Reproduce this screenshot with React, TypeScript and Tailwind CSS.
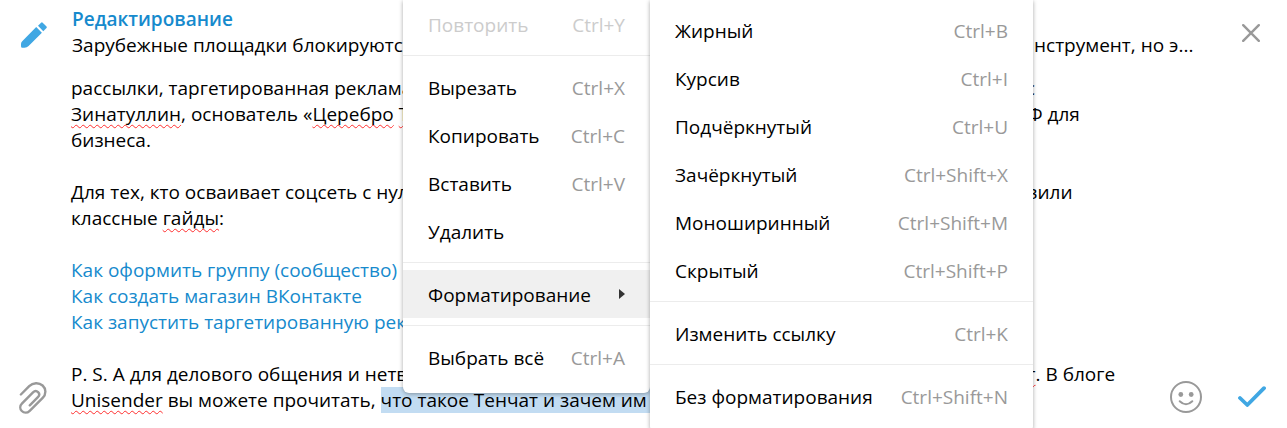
import type { ReactNode } from "react";

type MenuEntry = {
  label: string;
  shortcut?: string;
  disabled?: boolean;
  active?: boolean;
  submenu?: boolean;
};

const editGroups: MenuEntry[][] = [
  [{ label: "Повторить", shortcut: "Ctrl+Y", disabled: true }],
  [
    { label: "Вырезать", shortcut: "Ctrl+X" },
    { label: "Копировать", shortcut: "Ctrl+C" },
    { label: "Вставить", shortcut: "Ctrl+V" },
    { label: "Удалить" },
  ],
  [{ label: "Форматирование", active: true, submenu: true }],
  [{ label: "Выбрать всё", shortcut: "Ctrl+A" }],
];

const formatGroups: MenuEntry[][] = [
  [
    { label: "Жирный", shortcut: "Ctrl+B" },
    { label: "Курсив", shortcut: "Ctrl+I" },
    { label: "Подчёркнутый", shortcut: "Ctrl+U" },
    { label: "Зачёркнутый", shortcut: "Ctrl+Shift+X" },
    { label: "Моноширинный", shortcut: "Ctrl+Shift+M" },
    { label: "Скрытый", shortcut: "Ctrl+Shift+P" },
  ],
  [{ label: "Изменить ссылку", shortcut: "Ctrl+K" }],
  [{ label: "Без форматирования", shortcut: "Ctrl+Shift+N" }],
];

function MenuItem({ label, shortcut, disabled, active, submenu }: MenuEntry) {
  return (
    <button
      type="button"
      role="menuitem"
      disabled={disabled}
      aria-haspopup={submenu ? "menu" : undefined}
      className={`flex h-12 w-full items-center justify-between whitespace-nowrap px-[25px] pt-[2px] text-left ${
        active ? "bg-[#f0f0f0]" : ""
      } ${disabled ? "text-[#cccccc]" : "text-black"}`}
    >
      <span>{label}</span>
      {shortcut && (
        <span className={disabled ? "text-[#cccccc]" : "text-[#999999]"}>{shortcut}</span>
      )}
      {submenu && (
        <svg viewBox="0 0 6 12" className="h-3 w-[6px]" fill="#333333" aria-hidden="true">
          <path d="M0 0L6 5L0 10Z" />
        </svg>
      )}
    </button>
  );
}

function Menu({ groups, className }: { groups: MenuEntry[][]; className: string }) {
  return (
    <div
      role="menu"
      className={`shrink-0 rounded-b-md bg-white shadow-[0_1px_4px_rgba(0,0,0,0.35)] ${className}`}
    >
      {groups.map((group, index) => (
        <div key={group[0].label}>
          {index > 0 && <hr className="my-[7px] border-t border-[#ececec]" />}
          {group.map((entry) => (
            <MenuItem key={entry.label} {...entry} />
          ))}
        </div>
      ))}
    </div>
  );
}

function Misspelled({ children }: { children: ReactNode }) {
  return (
    <span className="underline decoration-[#ff2e2e] decoration-wavy decoration-1 underline-offset-[3px] [text-decoration-skip-ink:none]">
      {children}
    </span>
  );
}

// A line of the message: its beginning and the part that continues past the menus.
function Line({ children, rest }: { children?: ReactNode; rest?: ReactNode }) {
  return (
    <div className="flex h-[26px] whitespace-nowrap">
      <div className="w-[945px] shrink-0">{children}</div>
      <div className="min-w-0 grow">{rest}</div>
    </div>
  );
}

export default function App() {
  return (
    <main className="relative flex min-h-screen flex-col overflow-hidden bg-white font-['Open_Sans',sans-serif] text-[19px] leading-[26px] text-black">
      <header className="flex pt-[6px]">
        <div className="w-[72px] shrink-0 pl-[21px] pt-[15px]">
          <svg viewBox="0 0 27 27" className="size-[27px]" fill="#40a7e3" aria-hidden="true">
            <path d="M15.2 6L20.9 11.7L7.6 25Q6 26.7 3.4 26.7H1.4Q0 26.7 0 25.2V23Q0 21.4 1.2 20.2Z" />
            <path d="M17 4.8L20.1 1.7Q20.9 1 21.7 1.7L25.5 5.4Q26.2 6.2 25.5 7L22.3 10.2Z" />
          </svg>
        </div>
        <div className="min-w-0 grow">
          <h1 className="font-semibold text-[#168acd]">Редактирование</h1>
          <Line rest="&nbsp;инструмент, но э...">Зарубежные площадки блокируются</Line>
        </div>
        <button type="button" aria-label="Закрыть" className="mr-[27px] mt-[18px] size-[18px] shrink-0">
          <svg viewBox="0 0 18 18" className="size-[18px]" stroke="#999999" strokeWidth="2.4" strokeLinecap="round">
            <path d="M1.2 1.2L16.8 16.8M16.8 1.2L1.2 16.8" />
          </svg>
        </button>
      </header>

      <section className="flex pt-[17px]">
        <div className="flex w-[71px] shrink-0 items-end pb-[2px] pl-[19px]">
          <button type="button" aria-label="Прикрепить файл">
            <svg viewBox="0 0 28 33" className="h-[33px] w-[28px]" fill="none" stroke="#999999" strokeWidth="2.4" strokeLinecap="round">
              <path d="M1.9 12.5L10.2 4.2C14 0.4 20 0.4 23.6 3.5C27.2 6.8 27.3 12.2 23.7 15.8L10.7 28.8C8.2 31.3 4.9 31.2 2.8 29C0.7 26.9 0.8 23.7 3.1 21.4L14 10.4C15.6 8.8 17.7 8.8 19.1 10.2C20.5 11.6 20.4 13.7 18.9 15.2L10.8 23.3" />
            </svg>
          </button>
        </div>
        <div role="textbox" aria-multiline="true" aria-label="Сообщение" className="min-w-0 grow pb-1">
          <Line rest=", с">рассылки, таргетированная реклама</Line>
          <Line rest="РФ для">
            <Misspelled>Зинатуллин</Misspelled>, основатель «<Misspelled>Церебро</Misspelled>{" "}
            <Misspelled>Таргет</Misspelled>»
          </Line>
          <Line>бизнеса.</Line>
          <Line />
          <Line rest="авили">Для тех, кто осваивает соцсеть с нуля</Line>
          <Line>
            классные <Misspelled>гайды</Misspelled>:
          </Line>
          <Line />
          <Line>
            <a href="#group" className="text-[#168acd]">Как оформить группу (сообщество)</a>
          </Line>
          <Line>
            <a href="#shop" className="text-[#168acd]">Как создать магазин ВКонтакте</a>
          </Line>
          <Line>
            <a href="#ads" className="text-[#168acd]">Как запустить таргетированную рекламу</a>
          </Line>
          <Line />
          <Line rest={<><Misspelled>ат</Misspelled>. В блоге</>}>
            P. S. А для делового общения и нетворкинга
          </Line>
          <Line>
            <Misspelled>Unisender</Misspelled> вы можете прочитать,{" "}
            <mark className="inline-block h-[26px] bg-[#c2dcf2] text-black">что такое Тенчат и зачем им нужен</mark>
          </Line>
        </div>
        <div className="flex shrink-0 items-end gap-9 pb-1 pr-[21px]">
          <button type="button" aria-label="Эмодзи">
            <svg viewBox="0 0 32 32" className="size-8" fill="none" stroke="#999999" strokeWidth="2">
              <circle cx="16" cy="16" r="15" />
              <circle cx="10.8" cy="13.5" r="2.4" fill="#999999" stroke="none" />
              <circle cx="21.2" cy="13.5" r="2.4" fill="#999999" stroke="none" />
              <path d="M9.7 20.3Q16 26.3 22.3 20.3" strokeLinecap="round" />
            </svg>
          </button>
          <button type="button" aria-label="Сохранить" className="pb-[6px]">
            <svg viewBox="0 0 28 21" className="h-[21px] w-[28px]" fill="none" stroke="#40a7e3" strokeWidth="3.8" strokeLinecap="round" strokeLinejoin="round">
              <path d="M2 12L9.3 19L26 2.2" />
            </svg>
          </button>
        </div>
      </section>

      <div className="absolute left-[403px] top-0 flex items-start">
        <Menu groups={editGroups} className="w-[247px] pb-3" />
        <Menu groups={formatGroups} className="w-[383px] pb-3 pt-[6px]" />
      </div>
    </main>
  );
}
